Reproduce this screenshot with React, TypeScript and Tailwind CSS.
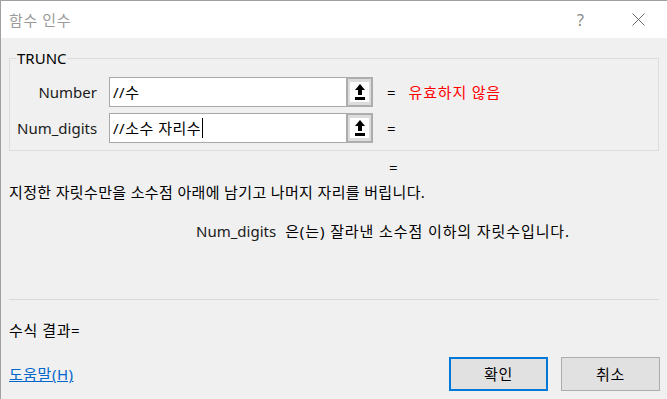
import { useState } from 'react'

const font = "font-['Noto_Sans','Noto_Sans_CJK_KR',sans-serif]"

function RefButton() {
  // collapse-dialog button next to each argument box
  return (
    <div className="w-[27px] h-[30px] border-2 border-[#adadad] bg-[#dcdcdc] flex items-center justify-center">
      <div className="w-[19px] h-[20px] bg-white flex items-center justify-center">
        <svg width="10" height="16" viewBox="0 0 10 16">
          <path d="M5 0 L10 6 L7 6 L7 11 L3 11 L3 6 L0 6 Z" fill="#000" />
          <rect x="0" y="13" width="10" height="3" fill="#000" />
        </svg>
      </div>
    </div>
  )
}

interface ArgRow {
  label: string
  value: string
  result?: string
  focused?: boolean
}

const rows: ArgRow[] = [
  { label: 'Number', value: '//수', result: '유효하지 않음' },
  { label: 'Num_digits', value: '//소수 자리수', focused: true },
]

export default function App() {
  const [values] = useState(rows)

  return (
    <div className={`w-[667px] h-[399px] bg-[#f0f0f0] border-l border-t border-[#a0a0a0] text-[15px] text-black ${font} overflow-hidden`}>
      {/* title bar */}
      <div className="h-[37px] bg-white flex items-center pl-[8px] pr-[22px]">
        <span className="text-[#9a9a9a] leading-[18px] tracking-[0.6px]">함수 인수</span>
        <span className="ml-auto text-[#8a8a8a] text-[16px] leading-[18px]">?</span>
        <svg className="ml-[48px]" width="13" height="13" viewBox="0 0 13 13">
          <path d="M0.5 0.5 L12.5 12.5 M12.5 0.5 L0.5 12.5" stroke="#6a6a6a" strokeWidth="1" />
        </svg>
      </div>

      <fieldset className="ml-[8px] mt-[12px] w-[650px] border border-[#dcdcdc] px-[7px] pt-[11px] pb-[7px]">
        <legend className="leading-[16px]">TRUNC</legend>
        <div className="flex flex-col gap-[6px]">
          {values.map(r => (
            <div key={r.label} className="flex items-center h-[30px]">
              <div className="w-[80px] text-right leading-[18px] text-[#1a1a1a]">{r.label}</div>
              <div className="ml-[12px] w-[237px] h-[30px] bg-white border border-[#a8a8a8] border-r-0 flex items-center pl-[3px] leading-[18px]">
                <span className="tracking-[0.5px]">{r.value}</span>
                {r.focused && <span className="w-px h-[20px] bg-black ml-[1px]" />}
              </div>
              <RefButton />
              <span className="ml-[14px] leading-[18px]">=</span>
              {r.result && <span className="ml-[13px] text-[#ff0000] leading-[18px] tracking-[0.8px]">{r.result}</span>}
            </div>
          ))}
        </div>
      </fieldset>

      <div className="mt-[7px] pl-[388px] leading-[18px]">=</div>
      <div className="mt-[7px] pl-[8px] leading-[18px] tracking-[0.35px]">지정한 자릿수만을 소수점 아래에 남기고 나머지 자리를 버립니다.</div>
      <div className="mt-[21px] pl-[195px] leading-[18px] flex">
        <span className="text-[#1a1a1a]">Num_digits</span>
        <span className="ml-[9px] tracking-[0.9px]">은(는) 잘라낸 소수점 이하의 자릿수입니다.</span>
      </div>

      <div className="mt-[59px] ml-[8px] w-[650px] h-px bg-[#d9d9d9]" />

      <div className="mt-[21px] pl-[8px] leading-[18px] tracking-[0.6px]">수식 결과=</div>

      <div className="mt-[18px] h-[34px] flex items-center pl-[8px] pr-[7px]">
        <a className="text-[#0066cc] underline leading-[18px] cursor-pointer tracking-[0.5px]">도움말(H)</a>
        <button className="ml-auto w-[99px] h-[34px] bg-[#e1e1e1] border-2 border-[#0078d7] leading-[18px] tracking-[0.6px]">확인</button>
        <button className="ml-[13px] w-[99px] h-[34px] bg-[#e1e1e1] border border-[#adadad] leading-[18px] tracking-[0.6px]">취소</button>
      </div>
    </div>
  )
}
